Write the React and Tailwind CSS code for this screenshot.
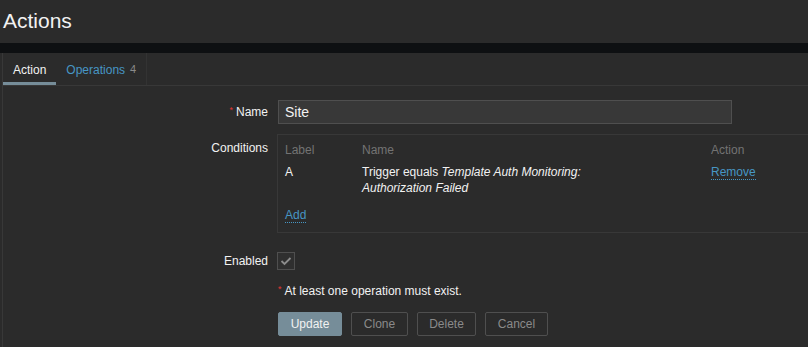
import React from "react";

function Btn({ children, primary, w }) {
  return (
    <div
      className={
        "h-[24px] flex items-center justify-center rounded-[2px] text-[12px] " +
        w +
        " " +
        (primary
          ? "bg-[#768d99] text-[#f2f2f2] border border-[#768d99]"
          : "border border-[#4f4f4f] text-[#8a8a8a]")
      }
    >
      {children}
    </div>
  );
}

export default function App() {
  return (
    <div
      className="w-[808px] h-[347px] overflow-hidden bg-[#2b2b2b] text-[#f2f2f2] text-[12px]"
      style={{ fontFamily: '"Liberation Sans", Arial, sans-serif' }}
    >
      {/* Header */}
      <div className="h-[43px] bg-[#2b2b2b] flex items-center pl-[3px]">
        <h1 className="text-[21px] leading-none text-[#f2f2f2] -mt-[2px]">Actions</h1>
      </div>
      <div className="h-[10px] bg-[#0e1012]" />

      {/* Panel */}
      <div className="ml-[2px] border-l border-[#383838] bg-[#2b2b2b] h-[294px] overflow-hidden">
        {/* Tabs */}
        <div className="h-[33px] flex border-b border-[#383838]">
          <div className="flex border-r border-[#333333]">
            <div className="relative px-[10px] pt-[1px] flex items-center text-[#f2f2f2]">
              Action
              <div className="absolute left-0 right-0 bottom-0 h-[3px] bg-[#768d99]" />
            </div>
            <div className="px-[10px] pt-[1px] flex items-center">
              <span className="text-[#4796c4]">Operations</span>
              <span className="ml-[5px] text-[11px] text-[#8a8a8a]">4</span>
            </div>
          </div>
          <div className="flex-1" />
        </div>

        {/* Form */}
        <div className="pt-[14px]">
          {/* Name */}
          <div className="flex items-center">
            <div className="w-[265px] shrink-0 text-right">
              <span className="text-[#e33734] text-[9px] relative -top-[3px] mr-[3px]">*</span>
              Name
            </div>
            <div className="ml-[10px] w-[454px] shrink-0 h-[24px] bg-[#383838] border border-[#4f4f4f] flex items-center px-[6px] text-[14px] text-[#f2f2f2]">
              Site
            </div>
          </div>

          {/* Conditions */}
          <div className="flex mt-[10px]">
            <div className="w-[265px] shrink-0 text-right pt-[5px]">Conditions</div>
            <div className="ml-[9px] w-[600px] shrink-0 h-[99px] border border-[#383838] pl-[7px] pt-[6px]">
              <div className="flex text-[#737373] h-[14px]">
                <div className="w-[77px] shrink-0">Label</div>
                <div className="w-[349px] shrink-0">Name</div>
                <div>Action</div>
              </div>
              <div className="flex mt-[9px] leading-[16px]">
                <div className="w-[77px] shrink-0">A</div>
                <div className="w-[349px] shrink-0">
                  Trigger equals <i>Template Auth Monitoring:</i>
                  <br />
                  <i>Authorization Failed</i>
                </div>
                <div>
                  <span className="text-[#4796c4] border-b border-dotted border-[#4796c4]">Remove</span>
                </div>
              </div>
              <div className="mt-[10px]">
                <span className="text-[#4796c4] border-b border-dotted border-[#4796c4]">Add</span>
              </div>
            </div>
          </div>

          {/* Enabled */}
          <div className="flex items-center mt-[19px]">
            <div className="w-[265px] shrink-0 text-right">Enabled</div>
            <div className="ml-[9px] w-[18px] h-[18px] border border-[#4f4f4f] bg-[#2f2f2f] flex items-center justify-center">
              <svg width="12" height="10" viewBox="0 0 12 10">
                <path d="M1.5 5 L4.5 8 L10.5 2" stroke="#8c8c8c" strokeWidth="1.8" fill="none" />
              </svg>
            </div>
          </div>

          {/* Warning */}
          <div className="flex mt-[12px]">
            <div className="w-[265px] shrink-0" />
            <div className="ml-[10px]">
              <span className="text-[#e33734] text-[9px] relative -top-[3px] mr-[3px]">*</span>
              At least one operation must exist.
            </div>
          </div>

          {/* Buttons */}
          <div className="flex mt-[12px]">
            <div className="w-[265px] shrink-0" />
            <div className="ml-[10px] flex gap-[9px]">
              <Btn primary w="w-[64px]">Update</Btn>
              <Btn w="w-[57px]">Clone</Btn>
              <Btn w="w-[59px]">Delete</Btn>
              <Btn w="w-[63px]">Cancel</Btn>
            </div>
          </div>
        </div>
      </div>
    </div>
  );
}
